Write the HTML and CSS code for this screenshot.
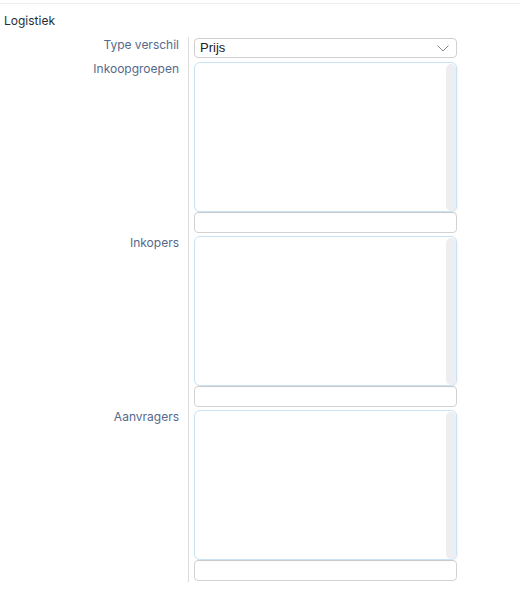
FILE: index.html
```html
<!DOCTYPE html>
<html lang="nl">
<head>
    <meta charset="UTF-8">
    <title>Logistiek</title>
    <link rel="stylesheet" href="styles.css">
</head>
<body>
    <div class="section">
        <h3 class="section-title">Logistiek</h3>
        <div class="form-grid">
            <label class="field-label first">Type verschil</label>
            <div class="field first">
                <div class="select-box">
                    <span>Prijs</span>
                    <svg class="chevron" width="12" height="7" viewBox="0 0 12 7">
                        <path d="M0.5 0.5 L6 6 L11.5 0.5" fill="none" stroke="#8a8a8a" stroke-width="1"/>
                    </svg>
                </div>
            </div>

            <label class="field-label">Inkoopgroepen</label>
            <div class="field">
                <div class="list-wrap"><textarea class="list-box"></textarea></div>
                <input type="text" class="filter-input">
            </div>

            <label class="field-label">Inkopers</label>
            <div class="field">
                <div class="list-wrap"><textarea class="list-box"></textarea></div>
                <input type="text" class="filter-input">
            </div>

            <label class="field-label">Aanvragers</label>
            <div class="field last">
                <div class="list-wrap"><textarea class="list-box"></textarea></div>
                <input type="text" class="filter-input">
            </div>
        </div>
    </div>
</body>
</html>
```
FILE: styles.css
```css
body {
    margin: 0;
    background-color: #fff;
    font-family: Inter, "Noto Sans", sans-serif;
    color: #333;
}

.section {
    margin-top: 3px;
    border-top: 1px solid #ececec;
}

.section-title {
    margin: 0;
    padding: 9px 0 0 4px;
    font-size: 12px;
    font-weight: 400;
    line-height: 15px;
    color: #1f2d3d;
}

.form-grid {
    display: grid;
    grid-template-columns: 188px 270px;
    margin-top: 9px;
}

.field-label {
    padding-right: 9px;
    text-align: right;
    font-size: 12px;
    line-height: 14px;
    color: #56698a;
}

.field-label.first {
    padding-top: 1px;
}

.field {
    display: flex;
    flex-direction: column;
    border-left: 1px solid #dcdcdc;
    padding-left: 5px;
    padding-bottom: 3px;
}

.field.first {
    padding-top: 1px;
    padding-bottom: 4px;
}

.field.last {
    padding-bottom: 1px;
}

.select-box {
    position: relative;
    box-sizing: border-box;
    height: 20px;
    width: 263px;
    border: 1px solid #cfcfcf;
    border-radius: 4px;
    padding-left: 5px;
    font-family: "Liberation Sans", Arial, sans-serif;
    font-size: 13px;
    line-height: 18px;
    color: #222;
}

.chevron {
    position: absolute;
    right: 7px;
    top: 6px;
}

.list-wrap {
    position: relative;
    width: 263px;
}

/* fake scrollbar track */
.list-wrap::after {
    content: "";
    position: absolute;
    top: 2px;
    bottom: 1px;
    right: 1px;
    width: 10px;
    background-color: #eceef1;
    border-radius: 5px;
}

.list-box {
    display: block;
    box-sizing: border-box;
    width: 263px;
    height: 150px;
    margin: 0;
    border: 1px solid #c9e3f5;
    border-radius: 6px;
    box-shadow: 1px 1px 2px rgba(0, 0, 0, 0.05);
    resize: none;
    outline: none;
}

.filter-input {
    display: block;
    box-sizing: border-box;
    width: 263px;
    height: 20px;
    margin: 0;
    padding: 0 4px;
    border: 1px solid #d2d2d2;
    border-radius: 4px;
    outline: none;
}

.field .filter-input {
    margin-top: 0;
    height: 21px;
}
```
